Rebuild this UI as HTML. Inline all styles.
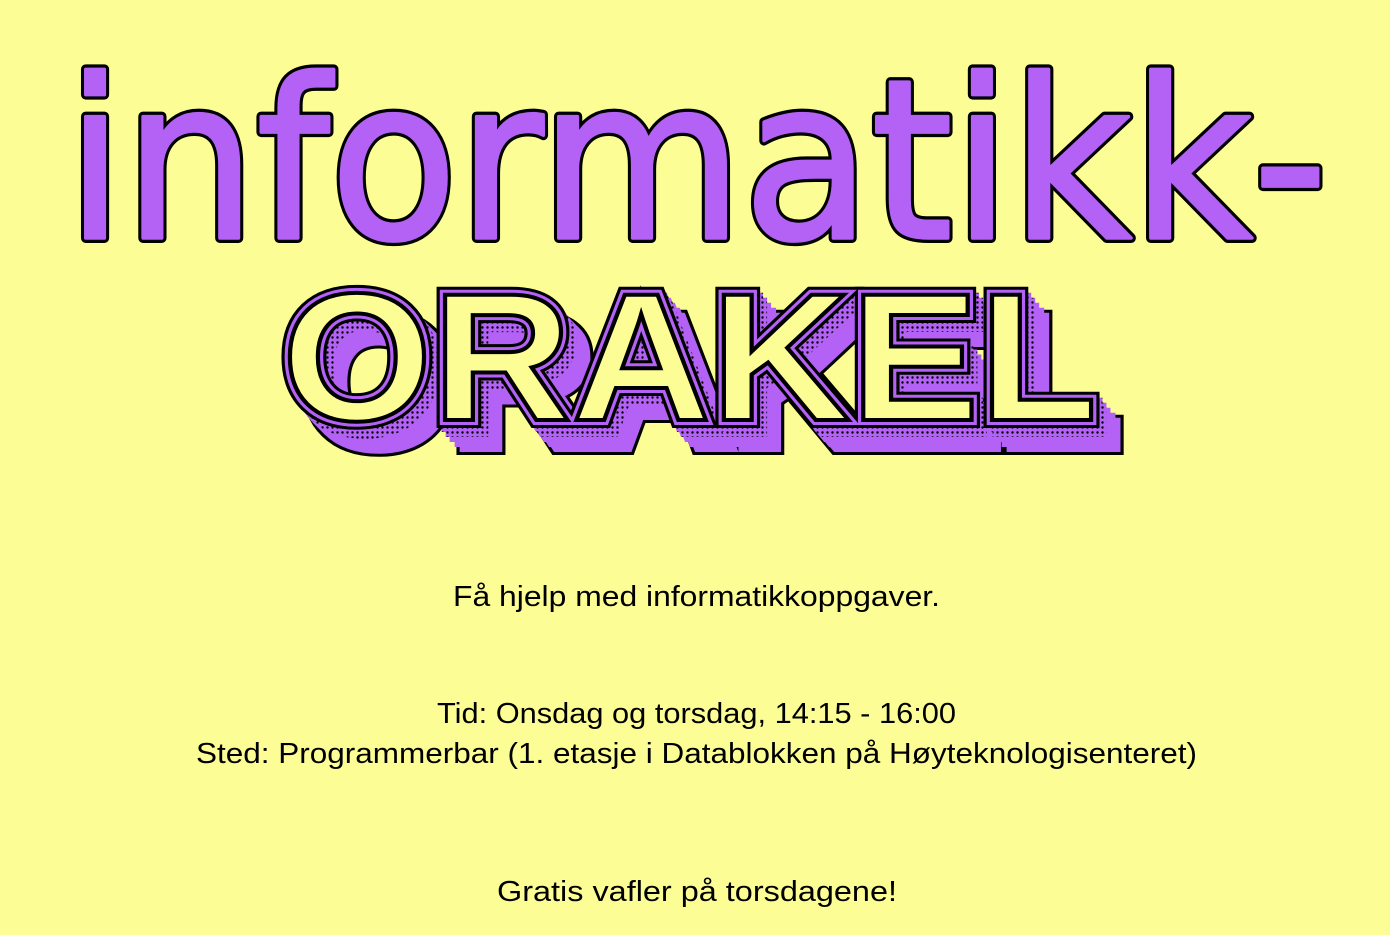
<!DOCTYPE html>
<html><head><meta charset="utf-8"><style>
html,body{margin:0;padding:0;background:#fdfd96;}
svg{display:block}
</style></head><body>
<svg width="1390" height="935" viewBox="0 0 1390 935" xmlns="http://www.w3.org/2000/svg">
<rect width="1390" height="935" fill="#fdfd96"/>
<defs>
<pattern id="dots" width="5" height="5" patternUnits="userSpaceOnUse">
<rect width="5" height="5" fill="#b362f5"/>
<circle cx="2.5" cy="2.5" r="1.2" fill="#000"/>
</pattern>
</defs>
<g font-family="DejaVu Sans, sans-serif" font-size="222" stroke-linejoin="round">
<text x="66" y="238" textLength="1262" lengthAdjust="spacingAndGlyphs" fill="#000" stroke="#000" stroke-width="10">informatikk-</text>
<text x="66" y="238" textLength="1262" lengthAdjust="spacingAndGlyphs" fill="#b362f5" stroke="#b362f5" stroke-width="3.5">informatikk-</text>
</g>

<g font-family="Liberation Sans, sans-serif" font-weight="bold" font-size="182" stroke-linejoin="miter">
  <text x="304" y="445" textLength="815" lengthAdjust="spacingAndGlyphs" fill="#000" stroke="#000" stroke-width="20">ORAKEL</text>
  <g fill="#b362f5" stroke="#b362f5" stroke-width="14">
  <text x="304" y="445" textLength="815" lengthAdjust="spacingAndGlyphs">ORAKEL</text>
  <text x="299" y="440" textLength="815" lengthAdjust="spacingAndGlyphs">ORAKEL</text>
  <text x="294" y="435" textLength="815" lengthAdjust="spacingAndGlyphs">ORAKEL</text>
  <text x="290" y="430" textLength="815" lengthAdjust="spacingAndGlyphs" fill="url(#dots)" stroke="url(#dots)">ORAKEL</text>
  <text x="286" y="425" textLength="815" lengthAdjust="spacingAndGlyphs" fill="url(#dots)" stroke="url(#dots)">ORAKEL</text>
  </g>
  <text x="282" y="420" textLength="815" lengthAdjust="spacingAndGlyphs" fill="#000" stroke="#000" stroke-width="16">ORAKEL</text>
  <text x="282" y="420" textLength="815" lengthAdjust="spacingAndGlyphs" fill="#b362f5" stroke="#b362f5" stroke-width="10">ORAKEL</text>
  <text x="282" y="420" textLength="815" lengthAdjust="spacingAndGlyphs" fill="#fdfd96" stroke="#000" stroke-width="4">ORAKEL</text>
</g>

<g font-family="Liberation Sans, sans-serif" font-size="29" fill="#000">
<text x="453" y="606" textLength="487" lengthAdjust="spacingAndGlyphs">Få hjelp med informatikkoppgaver.</text>
<text x="437" y="723" textLength="519" lengthAdjust="spacingAndGlyphs">Tid: Onsdag og torsdag, 14:15 - 16:00</text>
<text x="196" y="763" textLength="1001" lengthAdjust="spacingAndGlyphs">Sted: Programmerbar (1. etasje i Datablokken på Høyteknologisenteret)</text>
<text x="497" y="901" textLength="400" lengthAdjust="spacingAndGlyphs">Gratis vafler på torsdagene!</text>
</g>
</svg>
</body></html>
